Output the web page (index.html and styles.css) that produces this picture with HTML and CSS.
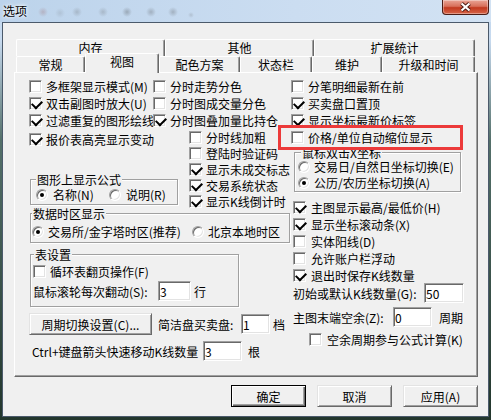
FILE: index.html
```html
<!DOCTYPE html>
<html lang="zh-CN">
<head>
    <meta charset="UTF-8">
    <title>选项</title>
    <link rel="stylesheet" href="styles.css">
</head>
<body>

<div class="window">
    <div class="titlebar">
        <div class="title">选项</div>
        <div class="close-btn">
            <svg width="13" height="10" viewBox="0 0 13 10">
                <path d="M2.5 1.5 L10.5 8.5 M10.5 1.5 L2.5 8.5" stroke="#4a1a12" stroke-width="4" fill="none"/>
                <path d="M2.5 1.5 L10.5 8.5 M10.5 1.5 L2.5 8.5" stroke="#ffffff" stroke-width="2.2" fill="none"/>
            </svg>
        </div>
    </div>

    <div class="client">
        <!-- 两行标签页 -->
        <div class="tabs">
            <div class="tab-row back">
                <div class="tab w149">内存</div>
                <div class="tab w149">其他</div>
                <div class="tab fill">扩展统计</div>
            </div>
            <div class="tab-row front">
                <div class="tab w69">常规</div>
                <div class="tab sel">视图</div>
                <div class="tab w81">配色方案</div>
                <div class="tab w72">状态栏</div>
                <div class="tab w70">维护</div>
                <div class="tab fill">升级和时间</div>
            </div>
        </div>

        <div class="panel">
            <div class="grid3">
                <label class="ck cut"><i class="box"></i>多框架显示模式(M)</label>
                <label class="ck"><i class="box"></i>分时走势分色</label>
                <label class="ck"><i class="box"></i>分笔明细最新在前</label>
                <label class="ck cut"><i class="box on"></i>双击副图时放大(U)</label>
                <label class="ck"><i class="box"></i>分时图成交量分色</label>
                <label class="ck"><i class="box on"></i>买卖盘口置顶</label>
                <label class="ck cut"><i class="box on"></i>过滤重复的图形绘线</label>
                <label class="ck"><i class="box on"></i>分时图叠加量比持仓</label>
                <label class="ck"><i class="box on"></i>显示坐标最新价标签</label>
            </div>

            <div class="mid">
                <div class="col-left">
                    <div class="left-top">
                        <div class="la">
                            <label class="ck"><i class="box on"></i>报价表高亮显示变动</label>
                            <div class="grp formula">
                                <div class="grp-t">图形上显示公式</div>
                                <div class="rrow">
                                    <label class="rd first"><i class="dot on"></i>名称(N)</label>
                                    <label class="rd"><i class="dot"></i>说明(R)</label>
                                </div>
                            </div>
                        </div>
                        <div class="lb">
                            <label class="ck"><i class="box"></i>分时线加粗</label>
                            <label class="ck"><i class="box"></i>登陆时验证码</label>
                            <label class="ck"><i class="box on"></i>显示未成交标志</label>
                            <label class="ck"><i class="box on"></i>交易系统状态</label>
                            <label class="ck"><i class="box on"></i>显示K线倒计时</label>
                        </div>
                    </div>

                    <div class="grp zone">
                        <div class="grp-t">数据时区显示</div>
                        <div class="rrow">
                            <label class="rd first"><i class="dot on"></i>交易所/金字塔时区(推荐)</label>
                            <label class="rd"><i class="dot"></i>北京本地时区</label>
                        </div>
                    </div>

                    <div class="grp table">
                        <div class="grp-t">表设置</div>
                        <label class="ck"><i class="box"></i>循环表翻页操作(F)</label>
                        <div class="frow">
                            <span class="lbl">鼠标滚轮每次翻动(S):</span>
                            <input class="edit" type="text" value="3">
                            <span class="unit">行</span>
                        </div>
                    </div>

                    <div class="btnrow">
                        <button class="btn period">周期切换设置(C)...</button>
                        <span class="lbl">简洁盘买卖盘:</span>
                        <input class="edit" type="text" value="1">
                        <span class="unit">档</span>
                    </div>

                    <div class="ctrlrow">
                        <span class="lbl">Ctrl+键盘箭头快速移动K线数量</span>
                        <input class="edit" type="text" value="3">
                        <span class="unit">根</span>
                    </div>
                </div>

                <div class="col-right">
                    <label class="ck"><i class="box"></i>价格/单位自动缩位显示</label>
                    <div class="grp mouse">
                        <div class="grp-t">鼠标双击X坐标</div>
                        <label class="rd"><i class="dot"></i>交易日/自然日坐标切换(E)</label>
                        <label class="rd"><i class="dot on"></i>公历/农历坐标切换(A)</label>
                    </div>
                    <div class="rlist">
                        <label class="ck"><i class="box on"></i>主图显示最高/最低价(H)</label>
                        <label class="ck"><i class="box on"></i>显示坐标滚动条(X)</label>
                        <label class="ck"><i class="box"></i>实体阳线(D)</label>
                        <label class="ck"><i class="box"></i>允许账户栏浮动</label>
                        <label class="ck"><i class="box on"></i>退出时保存K线数量</label>
                    </div>
                    <div class="frow init">
                        <span class="lbl">初始或默认K线数量(G):</span>
                        <input class="edit" type="text" value="50">
                    </div>
                    <div class="frow tail">
                        <span class="lbl">主图末端空余(Z):</span>
                        <input class="edit" type="text" value="0">
                        <span class="unit">周期</span>
                    </div>
                    <label class="ck spare"><i class="box"></i>空余周期参与公式计算(K)</label>
                </div>
            </div>

            <!-- 红色标注框 -->
            <div class="mark"></div>
        </div>

        <div class="dlg-buttons">
            <button class="btn default">确定</button>
            <button class="btn">取消</button>
            <button class="btn">应用(A)</button>
        </div>
    </div>
</div>

</body>
</html>
```

FILE: styles.css
```css
/* 基本设置 */
* {
    box-sizing: border-box;
}

html, body {
    margin: 0;
    padding: 0;
}

body {
    width: 491px;
    height: 420px;
    overflow: hidden;
    font-family: "Noto Sans CJK SC", "Liberation Sans", sans-serif;
    font-size: 12px;
    color: #000;
    background: linear-gradient(to bottom, #c3d8ee 0, #c7daef 40px, #54706a 140px, #22362c 100%);
}

.window {
    width: 491px;
    height: 420px;
    display: flex;
    flex-direction: column;
}

/* 标题栏 (背后窗口的模糊图标用渐变模拟) */
.titlebar {
    height: 22px;
    flex: none;
    display: flex;
    align-items: flex-start;
    background:
        radial-gradient(5px 5px at 43px 12px, rgba(150, 90, 90, 0.28), transparent),
        radial-gradient(5px 5px at 60px 13px, rgba(90, 90, 90, 0.15), transparent),
        radial-gradient(5px 5px at 77px 12px, rgba(90, 90, 90, 0.25), transparent),
        radial-gradient(5px 5px at 103px 12px, rgba(90, 90, 90, 0.25), transparent),
        radial-gradient(5px 5px at 127px 12px, rgba(60, 60, 60, 0.3), transparent),
        radial-gradient(5px 5px at 151px 12px, rgba(70, 70, 70, 0.28), transparent),
        radial-gradient(5px 5px at 173px 12px, rgba(70, 70, 70, 0.28), transparent),
        radial-gradient(3px 3px at 191px 15px, rgba(90, 90, 90, 0.2), transparent),
        linear-gradient(to right, #bcd3eb, #cbddf1 60%, #d2e2f3);
}

.title {
    margin: 4px 0 0 3px;
    line-height: 14px;
    text-shadow: 0 0 5px #fff, 0 0 3px #fff;
}

.close-btn {
    margin-left: auto;
    margin-right: 2px;
    width: 47px;
    height: 15px;
    border: 1px solid #4b1d16;
    border-top: none;
    border-radius: 0 0 4px 4px;
    background: linear-gradient(#e9a596, #d8705b 45%, #c2391f 55%, #d66548);
    box-shadow: inset 0 0 0 1px rgba(255, 255, 255, 0.35);
    display: flex;
    align-items: center;
    justify-content: center;
}

/* 对话框客户区 */
.client {
    margin-left: 2px;
    width: 487px;
    height: 395px;
    border: 1px solid #4b5a6b;
    background: #f0f0f0;
}

/* 标签页 */
.tabs {
    margin: 16px 0 0 13px;
    width: 459px;
}

.tab-row {
    display: flex;
}

.tab-row.back {
    height: 17px;
}

.tab-row.front {
    height: 16px;
    align-items: flex-end;
}

.tab {
    height: 100%;
    border: 1px solid;
    border-bottom: none;
    border-color: #fff #696969 #fff #fff;
    box-shadow: inset -1px 0 #a0a0a0;
    border-radius: 2px 2px 0 0;
    text-align: center;
    line-height: 15px;
    background: #f0f0f0;
}

.tab-row.back .tab {
    line-height: 16px;
}

.w149 { width: 149px; }
.w69 { width: 69px; }
.w81 { width: 81px; }
.w72 { width: 72px; }
.w70 { width: 70px; }
.fill { flex: 1; }

.tab.sel {
    width: 74px;
    height: 20px;
    margin-bottom: -1px;
    position: relative;
    z-index: 1;
    line-height: 16px;
}

/* 选项面板 */
.panel {
    margin-left: 11px;
    width: 464px;
    height: 305px;
    border: 1px solid;
    border-color: #fff #696969 #696969 #fff;
    box-shadow: inset -1px -1px #a0a0a0;
    padding: 7px 0 0 14px;
    position: relative;
}

.grid3 {
    display: grid;
    grid-template-columns: 124px 138px 1fr;
    row-gap: 4px;
}

/* 第一列文字在控件边界处被截断 */
.grid3 .ck.cut {
    overflow-x: clip;
    overflow-y: visible;
}

/* 复选框 */
.ck {
    display: flex;
    align-items: center;
    gap: 4px;
    height: 13px;
    line-height: 13px;
    white-space: nowrap;
}

.box {
    flex: none;
    width: 13px;
    height: 13px;
    background: #fff;
    border: 1px solid;
    border-color: #a0a0a0 #fff #fff #a0a0a0;
    box-shadow: inset 1px 1px #696969, inset -1px -1px #e3e3e3;
    position: relative;
}

.box.on::after {
    content: "";
    position: absolute;
    left: 1.5px;
    top: 1.5px;
    width: 8px;
    height: 5px;
    border-left: 2px solid #000;
    border-bottom: 2px solid #000;
    transform: rotate(-45deg);
}

/* 单选框 */
.rd {
    display: flex;
    align-items: center;
    gap: 5px;
    height: 12px;
    line-height: 12px;
    white-space: nowrap;
}

.dot {
    flex: none;
    width: 12px;
    height: 12px;
    border-radius: 50%;
    background: #fff;
    border: 1px solid;
    border-color: #a0a0a0 #fff #fff #a0a0a0;
    box-shadow: inset 1px 1px #696969, inset -1px -1px #e3e3e3;
    position: relative;
}

.dot.on::after {
    content: "";
    position: absolute;
    left: 3px;
    top: 3px;
    width: 4px;
    height: 4px;
    border-radius: 50%;
    background: #000;
}

/* 分组框 */
.grp {
    border: 1px solid #a0a0a0;
    box-shadow: inset 1px 1px #fff, 1px 1px #fff;
}

.grp-t {
    width: fit-content;
    height: 13px;
    line-height: 13px;
    margin: -7px 0 0 5px;
    padding: 0 1px;
    background: #f0f0f0;
}

.rrow {
    display: flex;
    margin-top: 3px;
}

.mid {
    display: flex;
    margin-top: 4px;
}

.col-left {
    width: 262px;
    flex: none;
}

.col-right {
    flex: 1;
}

.left-top {
    display: flex;
}

.la {
    width: 160px;
    flex: none;
}

.la .ck {
    margin-top: 2px;
}

.lb {
    display: flex;
    flex-direction: column;
    gap: 3px;
}

.grp.formula {
    margin: 33px 0 0 1px;
    width: 148px;
    padding-bottom: 3px;
}

.grp.formula .rrow {
    padding-left: 5px;
}

.grp.formula .rd.first {
    width: 73px;
}

.grp.zone {
    margin: 5px 0 0 1px;
    width: 260px;
    padding-bottom: 4px;
}

.grp.zone .grp-t {
    margin-left: 1px;
}

.grp.zone .rrow {
    margin-top: 6px;
    padding-left: 1px;
}

.grp.zone .rd {
    gap: 4px;
}

.grp.zone .rd.first {
    width: 160px;
}

.grp.table {
    margin: 11px 0 0 1px;
    width: 209px;
    padding-bottom: 5px;
}

.grp.table .grp-t {
    margin-left: 3px;
}

.grp.table .ck {
    margin: 4px 0 0 2px;
}

.grp.table .frow {
    margin: 3px 0 0 2px;
}

.grp.table .lbl {
    width: 125px;
}

.grp.table .edit {
    width: 33px;
}

/* 输入框 */
.frow {
    display: flex;
    align-items: center;
    height: 20px;
}

.lbl {
    flex: none;
    white-space: nowrap;
}

.unit {
    margin-left: 3px;
}

.edit {
    flex: none;
    height: 20px;
    margin: 0;
    padding: 0 1px;
    font-family: "Noto Sans CJK SC", "Liberation Sans", sans-serif;
    font-size: 12px;
    color: #000;
    background: #fff;
    border: 1px solid;
    border-color: #a0a0a0 #fff #fff #a0a0a0;
    box-shadow: inset 1px 1px #696969, inset -1px -1px #e3e3e3;
    outline: none;
}

/* 按钮 */
.btn {
    height: 22px;
    margin: 0;
    padding: 0;
    font-family: "Noto Sans CJK SC", "Liberation Sans", sans-serif;
    font-size: 12px;
    color: #000;
    background: #f0f0f0;
    border: 1px solid;
    border-color: #e3e3e3 #696969 #696969 #e3e3e3;
    box-shadow: inset 1px 1px #fff, inset -1px -1px #a0a0a0;
}

.btnrow {
    display: flex;
    align-items: center;
    margin-top: 6px;
}

.btn.period {
    width: 123px;
}

.btnrow .lbl {
    width: 83px;
    margin-left: 6px;
}

.btnrow .edit {
    width: 29px;
}

.ctrlrow {
    display: flex;
    align-items: center;
    margin: 6px 0 0 3px;
}

.ctrlrow .lbl {
    width: 171px;
}

.ctrlrow .edit {
    width: 39px;
}

.ctrlrow .unit {
    margin-left: 6px;
}

/* 右侧 */
.grp.mouse {
    margin: 8px 0 0 3px;
    width: 167px;
    padding-bottom: 2px;
}

.grp.mouse .grp-t {
    margin-left: 6px;
}

.grp.mouse .rd {
    margin: 2px 0 0 3px;
    gap: 4px;
}

.grp.mouse .rd + .rd {
    margin-top: 4px;
}

.rlist {
    display: flex;
    flex-direction: column;
    gap: 4px;
    margin: 9px 0 0 2px;
}

.rlist .ck {
    gap: 5px;
}

.frow.init {
    margin: 1px 0 0 2px;
}

.frow.init .lbl {
    width: 131px;
}

.frow.init .edit {
    width: 40px;
}

.frow.tail {
    margin: 4px 0 0 2px;
}

.frow.tail .lbl {
    width: 100px;
}

.frow.tail .edit {
    width: 39px;
}

.frow.tail .unit {
    margin-left: 7px;
}

.ck.spare {
    margin: 6px 0 0 18px;
    gap: 5px;
}

/* 红色标注框 */
.mark {
    position: absolute;
    left: 263px;
    top: 52px;
    width: 185px;
    height: 25px;
    border: 3px solid #ec3a3a;
}

/* 底部按钮 */
.dlg-buttons {
    display: flex;
    justify-content: flex-end;
    gap: 11px;
    margin-top: 8px;
    padding-right: 10px;
}

.dlg-buttons .btn {
    width: 75px;
}

.btn.default {
    border-color: #000;
    box-shadow: inset 1px 1px #fff, inset -1px -1px #696969, inset -2px -2px #a0a0a0;
}
```
